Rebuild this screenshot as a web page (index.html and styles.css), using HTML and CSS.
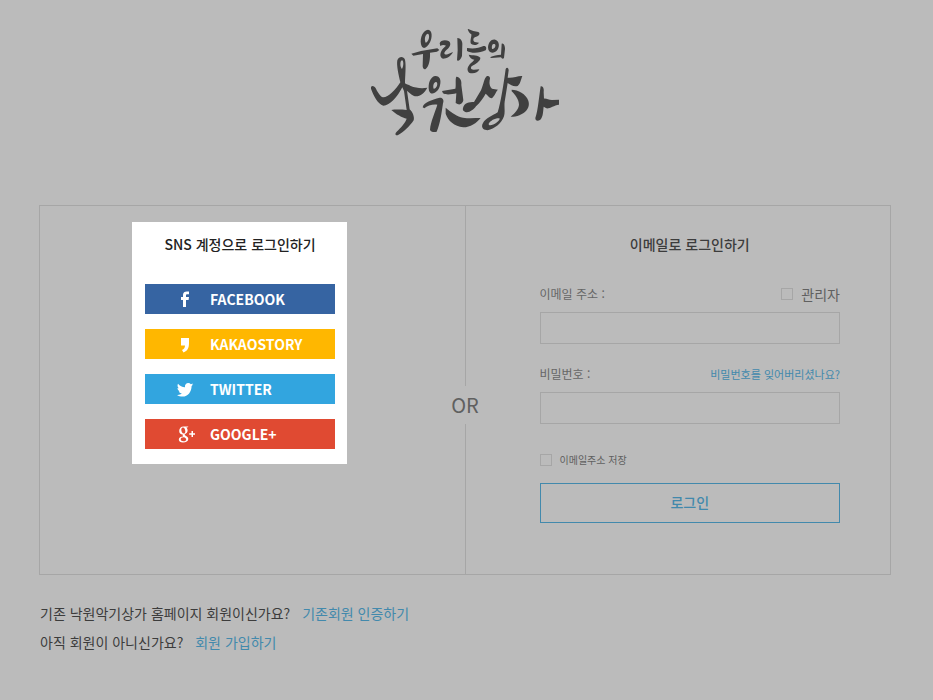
FILE: index.html
```html
<!DOCTYPE html>
<html lang="ko">
<head>
<meta charset="utf-8">
<meta name="viewport" content="width=device-width, initial-scale=1">
<title>로그인 - 우리들의 낙원상가</title>
<link rel="stylesheet" href="styles.css">
</head>
<body>
<header class="header">
  <a class="logo" href="#" aria-label="우리들의 낙원상가">
    <svg class="logo-art" viewBox="33 27 564 321" fill="currentColor" fill-rule="evenodd" aria-hidden="true">
      <path d="M183 73C179 52 190 30 204 29C218 31 217 52 210 67C202 83 187 92 183 73ZM197 68C192 57 196 41 204 41C211 46 206 65 197 68Z"/>
      <path d="M154 101L183 93L232 85L238 90L231 95L210 98C211 115 208 139 197 147C192 149 188 145 188 138L189 102L160 107Z"/>
      <path d="M239 70C241 60 258 59 267 64C276 72 268 85 257 92C250 99 253 106 263 103L279 96C273 109 260 116 249 116C236 112 241 94 250 85L258 77C252 74 246 75 241 78Z"/>
      <path d="M292 54C299 53 308 62 307 73L306 108C302 119 295 125 291 121L293 91Z"/>
      <path d="M323 26C332 31 345 35 355 36C363 41 356 49 346 51C339 53 338 63 344 66L357 68C352 77 337 77 332 70C330 60 335 49 334 43C329 40 324 34 323 26Z"/>
      <path d="M321 84C340 87 356 85 370 78C378 76 381 84 377 91C360 100 334 101 321 93Z"/>
      <path d="M326 104C338 106 355 105 361 113C362 123 346 132 336 138C330 143 333 150 342 149L358 148C354 160 337 162 327 158C317 148 326 134 337 126L343 119C335 119 329 112 326 104Z"/>
      <path d="M384 82C385 66 395 56 406 59C419 64 419 80 412 90C401 103 384 100 384 82ZM396 87C394 76 398 69 405 73C409 79 403 88 396 87Z"/>
      <path d="M390 112C400 106 412 105 423 104L425 71C430 67 436 78 435 87L432 113C430 118 425 116 423 112L394 114Z"/>
      <path d="M33 201C37 195 44 200 48 206C53 217 61 229 69 232C84 233 107 209 121 187C116 165 109 136 112 121C117 108 131 109 135 119C139 137 135 170 135 190C139 194 145 193 152 198C167 204 185 206 202 203C193 220 177 232 162 228C152 223 146 216 141 212L149 268C159 277 164 293 161 301C150 318 130 337 113 346C106 347 104 341 110 335C123 323 136 308 140 296C127 293 108 283 94 270C107 268 126 269 140 270L132 213L127 202C112 231 90 257 70 257C53 251 41 228 33 206ZM126 147C120 142 119 121 127 121C132 125 130 142 126 147Z"/>
      <path d="M207 212C203 190 211 171 225 168C240 167 244 181 240 196C236 217 213 230 207 212ZM221 206C217 196 224 182 230 187C235 193 229 207 221 206Z"/>
      <path d="M188 262C191 246 215 240 239 233C248 232 253 240 249 250C245 277 241 311 230 335C222 338 211 335 210 329C212 304 225 278 232 254C219 252 202 256 193 265Z"/>
      <path d="M246 213L286 206C289 197 285 177 289 170C298 169 306 180 304 195L310 241C307 253 298 257 287 249L289 220C276 223 258 226 249 220Z"/>
      <path d="M257 263C277 279 291 289 309 293C327 296 344 294 362 294C350 309 331 322 310 322C283 319 264 302 257 281Z"/>
      <path d="M309 264C313 248 327 246 342 246L363 211C371 193 372 174 381 168C389 167 392 173 389 181C387 193 390 201 396 206L414 209C407 215 405 228 395 235C387 233 383 226 377 221C370 233 360 248 348 259C340 270 328 279 316 276C310 274 307 270 309 264Z"/>
      <path d="M437 147C440 141 446 143 446 151L443 173C458 176 472 167 487 168C482 180 482 191 473 198C461 201 451 195 443 189L434 245C432 260 436 275 432 289C425 310 403 327 383 331C366 331 363 319 369 309C376 295 399 286 413 277C422 249 431 192 437 147ZM418 295C405 294 392 302 386 311C385 320 401 314 409 308C415 303 421 298 418 295Z"/>
      <path d="M455 209C474 209 498 222 505 242C511 260 500 275 484 283C475 289 463 292 452 290C465 279 476 267 477 254C477 239 465 223 455 214Z"/>
      <path d="M542 199C548 196 553 206 551 216L552 236C560 235 565 240 576 240L597 239L597 254C581 256 569 267 559 265L551 260C549 273 550 290 541 299C534 304 526 304 526 294C534 272 537 231 542 199Z"/>
    </svg>
  </a>
</header>

<main class="page">
  <div class="panel">
    <section class="sns" aria-labelledby="sns-title">
      <div class="sns-card">
        <h2 class="title" id="sns-title">SNS 계정으로 로그인하기</h2>
        <div class="sns-list">
          <button class="sns-button facebook" type="button">
            <svg class="sns-icon" viewBox="0 0 20 20" aria-hidden="true"><path d="M8 18V11H6V8H8V6C8 3.500 9.500 2.500 12 2.500H14V5.200H12.500C11.300 5.200 11 5.600 11 6.600V8H14L13.600 11H11V18Z"/></svg>
            <span>FACEBOOK</span>
          </button>
          <button class="sns-button kakao" type="button">
            <svg class="sns-icon" viewBox="0 0 20 20" aria-hidden="true"><path d="M6 4H14V9C14 14 12.500 17 8.500 18.500L7 16C9 15 10 13.500 10 11.500H6Z"/></svg>
            <span>KAKAOSTORY</span>
          </button>
          <button class="sns-button twitter" type="button">
            <svg class="sns-icon" viewBox="0 0 20 20" aria-hidden="true"><path d="M18.300 5.200L16.600 6.900C16.600 12.500 13 17.600 7.500 17.600C5.500 17.600 3.600 17.100 2 16C3.900 16.200 5.600 15.700 6.900 14.600C5.400 14.500 4.200 13.600 3.800 12.300H5.200C3.500 11.800 2.500 10.500 2.500 8.900L4 9.300C2.500 8.200 2.100 6.200 3 4.700C4.800 6.800 7.200 8.100 10 8.200C9.600 5.900 11.200 4.100 13.300 4.100C14.300 4.100 15.200 4.500 15.800 5.200L17.900 4.400L17 6Z"/></svg>
            <span>TWITTER</span>
          </button>
          <button class="sns-button google" type="button">
            <svg class="sns-icon" viewBox="0 0 20 20" aria-hidden="true"><path fill-rule="evenodd" d="M8.500 2.500H13.500L12.300 3.600H11.200C12.100 4.300 12.600 5.200 12.600 6.500C12.600 9.500 9.700 9.700 9.700 10.700C9.700 11.600 13.300 12.200 13.300 15C13.300 17.200 11 18.400 8 18.400C5.500 18.400 3.800 17.400 3.800 15.500C3.800 13.500 5.800 12.600 8.200 12.500C7.700 11.900 7.500 11.300 7.800 10.600C5.500 10.600 4.200 9.200 4.200 7C4.200 4.400 6 2.500 8.500 2.500ZM7.900 3.400C5.300 3.400 6.100 9.600 8.800 9.600C11.300 9.600 10.500 3.400 7.900 3.400ZM8.700 13.300C6.800 13.300 5.700 14 5.700 15.300C5.700 16.600 6.800 17.300 8.400 17.300C10.200 17.300 11.200 16.600 11.200 15.500C11.200 14.500 10.300 14 9.200 13.300ZM16.500 7H18V9.300H20.200V10.700H18V13H16.500V10.700H14.200V9.300H16.500Z"/></svg>
            <span>GOOGLE+</span>
          </button>
        </div>
      </div>
    </section>

    <div class="divider"><span class="divider-text">OR</span></div>

    <form class="login">
      <h2 class="title">이메일로 로그인하기</h2>
      <div class="field">
        <div class="field-head">
          <label class="label" for="email">이메일 주소 :</label>
          <label class="check admin"><input class="checkbox" type="checkbox" name="admin">관리자</label>
        </div>
        <input class="input" id="email" type="email" name="email">
      </div>
      <div class="field">
        <div class="field-head">
          <label class="label" for="password">비밀번호 :</label>
          <a class="forgot" href="#">비밀번호를 잊어버리셨나요?</a>
        </div>
        <input class="input" id="password" type="password" name="password">
      </div>
      <label class="check remember"><input class="checkbox" type="checkbox" name="remember">이메일주소 저장</label>
      <button class="submit" type="submit">로그인</button>
    </form>
  </div>

  <div class="help">
    <p class="help-line">기존 낙원악기상가 홈페이지 회원이신가요? <a class="help-link" href="#">기존회원 인증하기</a></p>
    <p class="help-line">아직 회원이 아니신가요? <a class="help-link" href="#">회원 가입하기</a></p>
  </div>
</main>
</body>
</html>
```
FILE: styles.css
```css
* {
  box-sizing: border-box;
}

body {
  margin: 0;
  background: #bbbbbb;
  color: #3c3c3c;
  font-family: "Noto Sans CJK KR", "Noto Sans", sans-serif;
  font-size: 14px;
  line-height: 20px;
}

a {
  color: #4289ac;
  text-decoration: none;
}

button,
input {
  font: inherit;
}

.header {
  display: flex;
  justify-content: center;
  padding: 29px 3px 69px 0;
}

.logo {
  display: block;
  color: #404040;
}

.logo-art {
  display: block;
  width: 188px;
  height: 107px;
}

.page {
  padding: 0 42px 0 39px;
}

.panel {
  display: grid;
  grid-template-columns: 1fr 1px 1fr;
  border: 1px solid #a6a6a6;
}

.title {
  margin: 0;
  font-size: 14px;
  font-weight: 500;
  line-height: 20px;
  text-align: center;
}

.sns {
  padding: 16px 0 16px 92px;
}

.sns-card {
  max-width: 215px;
  padding: 12px 12px 15px 13px;
  background: #ffffff;
  color: #222222;
}

.sns-list {
  display: grid;
  gap: 15px;
  margin-top: 30px;
}

.sns-button {
  display: flex;
  align-items: center;
  gap: 15px;
  height: 30px;
  padding: 0 0 0 30px;
  border: 0;
  color: #ffffff;
  font-weight: 700;
  cursor: pointer;
}

.sns-icon {
  width: 20px;
  height: 20px;
  fill: currentColor;
}

.facebook {
  background: #3664a2;
}

.kakao {
  background: #ffb700;
}

.twitter {
  background: #32a5df;
}

.google {
  background: #e04a32;
}

.divider {
  display: flex;
  flex-direction: column;
  align-items: center;
}

.divider::before,
.divider::after {
  content: "";
  width: 1px;
  background: #a6a6a6;
}

.divider::before {
  flex: 6 1 0;
}

.divider::after {
  flex: 5 1 0;
}

.divider-text {
  color: #606060;
  font-size: 20px;
  line-height: 38px;
}

.login {
  padding: 28px 50px 51px 74px;
}

.field {
  margin-top: 30px;
}

.field + .field {
  margin-top: 20px;
}

.field-head {
  display: flex;
  align-items: center;
  justify-content: space-between;
  height: 20px;
  margin-bottom: 8px;
}

.label {
  color: #666666;
  font-size: 12px;
}

.check {
  display: flex;
  align-items: center;
  gap: 8px;
  color: #606060;
}

.checkbox {
  width: 12px;
  height: 12px;
  margin: 0;
  border: 1px solid #a6a6a6;
  appearance: none;
}

.checkbox:checked {
  background: #4289ac;
}

.input {
  display: block;
  width: 100%;
  height: 32px;
  padding: 0 10px;
  border: 1px solid #a6a6a6;
  background: transparent;
}

.forgot {
  font-size: 11px;
}

.remember {
  margin-top: 26px;
  font-size: 10px;
}

.submit {
  width: 100%;
  height: 40px;
  margin-top: 13px;
  padding: 0 0 2px;
  border: 1px solid #4289ac;
  background: transparent;
  color: #4289ac;
  font-weight: 500;
  cursor: pointer;
}

.help {
  padding: 28px 1px;
}

.help-line {
  margin: 0 0 9px;
}

.help-link {
  margin-left: 8px;
}
```
